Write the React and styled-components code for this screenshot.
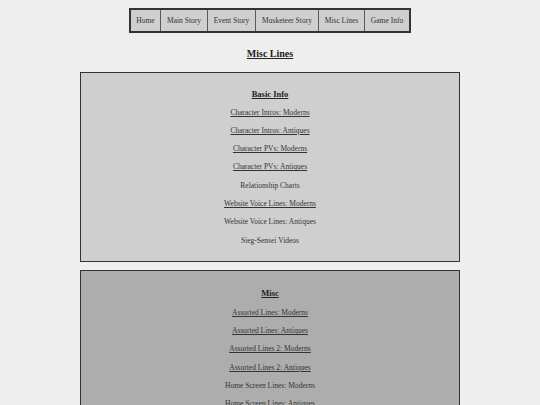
import styled, { createGlobalStyle } from 'styled-components';

const GlobalStyle = createGlobalStyle`
  html, body {
    margin: 0;
    padding: 0;
    background-color: #eeeeee;
  }
  body {
    font-family: "Liberation Serif", "Times New Roman", serif;
    color: #333333;
  }
`;

const colors = {
  border: '#333333',
  divider: '#5a5a5a',
  navBg: '#cfcfcf',
  basic: '#cfcfcf',
  misc: '#adadad',
  text: '#333333',
  heading: '#222222'
};

const Page = styled.div`
  display: flex;
  flex-direction: column;
  align-items: center;
  padding-top: 8px;
`;

const NavBar = styled.nav`
  display: flex;
  height: 21px;
  border: 2px solid ${colors.border};
  background-color: ${colors.navBg};
`;

const NavItem = styled.a`
  display: flex;
  align-items: center;
  justify-content: center;
  width: ${({ $w }) => $w}px;
  font-size: 7.5px;
  color: ${colors.text};
  text-decoration: none;
  & + & {
    border-left: 1px solid ${colors.divider};
  }
`;

const PageTitle = styled.h2`
  margin: 14px 0 11px;
  font-size: 10px;
  line-height: 14px;
  font-weight: bold;
  text-decoration: underline;
  color: ${colors.heading};
`;

const Panel = styled.section`
  box-sizing: border-box;
  width: 380px;
  display: flex;
  flex-direction: column;
  align-items: center;
  padding: ${({ $padTop }) => $padTop}px 0 11px;
  margin-bottom: 8px;
  border: 1.5px solid ${colors.border};
  background-color: ${({ $bg }) => $bg};
`;

const PanelTitle = styled.h3`
  margin: 0;
  font-size: 8.5px;
  line-height: ${({ $lh }) => $lh}px;
  font-weight: bold;
  text-decoration: underline;
  color: ${colors.heading};
`;

const LineLink = styled.a`
  font-size: 7.5px;
  line-height: 18.3px;
  color: ${colors.text};
  text-decoration: ${({ $plain }) => ($plain ? 'none' : 'underline')};
`;

const navLinks = [
  { label: 'Home', w: 29 },
  { label: 'Main Story', w: 46 },
  { label: 'Event Story', w: 47 },
  { label: 'Musketeer Story', w: 62 },
  { label: 'Misc Lines', w: 45 },
  { label: 'Game Info', w: 44 }
];

const sections = [
  {
    title: 'Basic Info',
    bg: colors.basic,
    padTop: 10.5,
    titleHeight: 20,
    lines: [
      { text: 'Character Intros: Moderns' },
      { text: 'Character Intros: Antiques' },
      { text: 'Character PVs: Moderns' },
      { text: 'Character PVs: Antiques' },
      { text: 'Relationship Charts', plain: true },
      { text: 'Website Voice Lines: Moderns' },
      { text: 'Website Voice Lines: Antiques', plain: true },
      { text: 'Sieg-Sensei Videos', plain: true }
    ]
  },
  {
    title: 'Misc',
    bg: colors.misc,
    padTop: 12,
    titleHeight: 21,
    lines: [
      { text: 'Assorted Lines: Moderns' },
      { text: 'Assorted Lines: Antiques' },
      { text: 'Assorted Lines 2: Moderns' },
      { text: 'Assorted Lines 2: Antiques' },
      { text: 'Home Screen Lines: Moderns', plain: true },
      { text: 'Home Screen Lines: Antiques', plain: true },
      { text: 'Event Lines', plain: true }
    ]
  }
];

export default function App() {
  return (
    <>
      <GlobalStyle />
      <Page>
        <NavBar>
          {navLinks.map((link) => (
            <NavItem key={link.label} $w={link.w}>
              {link.label}
            </NavItem>
          ))}
        </NavBar>
        <PageTitle>Misc Lines</PageTitle>
        {sections.map((section) => (
          <Panel key={section.title} $bg={section.bg} $padTop={section.padTop}>
            <PanelTitle $lh={section.titleHeight}>{section.title}</PanelTitle>
            {section.lines.map((line) => (
              <LineLink key={line.text} $plain={line.plain}>
                {line.text}
              </LineLink>
            ))}
          </Panel>
        ))}
      </Page>
    </>
  );
}
